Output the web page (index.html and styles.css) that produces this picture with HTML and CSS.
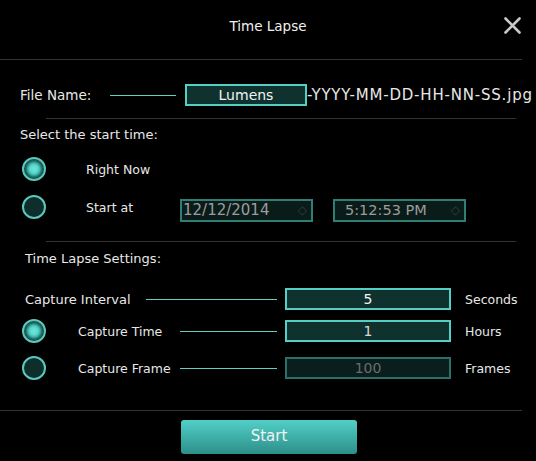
FILE: index.html
```html
<!DOCTYPE html>
<html>
<head>
<meta charset="utf-8">
<link rel="stylesheet" href="styles.css">
</head>
<body>
<div class="dialog">
  <div class="header">
    <div></div>
    <div class="title">Time Lapse</div>
    <div class="close">
      <svg width="17" height="17" viewBox="0 0 17 17"><path d="M1.5 1.5 L15.5 15.5 M15.5 1.5 L1.5 15.5" stroke="#c9c9c9" stroke-width="2.6" stroke-linecap="round"/></svg>
    </div>
  </div>

  <div class="file-row">
    <span class="file-label">File Name:</span>
    <span class="line file-line"></span>
    <div class="box file-box">Lumens</div>
    <span class="suffix">-YYYY-MM-DD-HH-NN-SS.jpg</span>
  </div>
  <div class="sep"></div>

  <div class="section-title start-title">Select the start time:</div>
  <div class="radio-row first">
    <span class="radio on"></span>
    <span class="radio-label">Right Now</span>
  </div>
  <div class="radio-row second">
    <span class="radio"></span>
    <span class="radio-label">Start at</span>
    <div class="picker"><span>12/12/2014</span><span class="spin">&#9671;</span></div>
    <div class="picker time"><span>5:12:53 PM</span><span class="spin">&#9671;</span></div>
  </div>
  <div class="sep sep2"></div>

  <div class="section-title settings-title">Time Lapse Settings:</div>
  <div class="set-row interval">
    <span class="set-label wide">Capture Interval</span>
    <span class="line l-wide"></span>
    <div class="box num">5</div>
    <span class="unit">Seconds</span>
  </div>
  <div class="set-row time-row">
    <span class="radio on"></span>
    <span class="set-label">Capture Time</span>
    <span class="line"></span>
    <div class="box num soft">1</div>
    <span class="unit">Hours</span>
  </div>
  <div class="set-row frame-row">
    <span class="radio"></span>
    <span class="set-label">Capture Frame</span>
    <span class="line"></span>
    <div class="box num dim">100</div>
    <span class="unit">Frames</span>
  </div>
  <div class="sep-full"></div>
  <div class="footer">
    <button class="start">Start</button>
  </div>
</div>
</body>
</html>
```

FILE: styles.css
```css
* { box-sizing: border-box; }
html, body {
  margin: 0;
  padding: 0;
  background: #000;
}
body {
  width: 536px;
  height: 461px;
  overflow: hidden;
  font-family: "DejaVu Sans", "Open Sans", sans-serif;
  color: #e8e8e8;
  font-size: 13px;
}
.dialog { width: 536px; }

.header {
  height: 60px;
  display: grid;
  grid-template-columns: 1fr auto 1fr;
  align-items: center;
  border-bottom: 1px solid #343434;
  margin-right: 14px;
  padding-left: 14px;
}
.title {
  font-size: 13.5px;
  color: #f0f0f0;
  padding-bottom: 8px;
}
.close {
  justify-self: end;
  margin-right: 1px;
  height: 17px;
  margin-bottom: 8px;
}
.close svg { display: block; }

.file-row {
  height: 58px;
  padding-top: 12px;
  padding-left: 20px;
  display: flex;
  align-items: center;
  white-space: nowrap;
}
.file-label { width: 90px; font-size: 13.5px; }
.line {
  display: block;
  height: 1px;
  background: #5fcfc4;
  flex: none;
}
.file-line { width: 66px; }
.box {
  border: 2px solid #55cfc3;
  background: #0f322f;
  color: #f2f2f2;
  text-align: center;
  font-size: 14px;
  display: flex;
  align-items: center;
  justify-content: center;
  flex: none;
}
.file-box {
  margin-left: 9px;
  width: 122px;
  height: 22px;
}
.suffix { font-size: 15px; letter-spacing: 0.8px; }

.sep {
  height: 1px;
  background: #333;
  margin-left: 46px;
  width: 470px;
}

.section-title {
  height: 31px;
  display: flex;
  align-items: center;
  font-size: 13px;
}
.start-title { padding-left: 20px; }
.settings-title { padding-left: 25px; height: 32px; }

.radio {
  display: block;
  width: 24px;
  height: 24px;
  border-radius: 50%;
  border: 2px solid #5cc8bc;
  background: #0d2e2b;
  flex: none;
}
.radio.on {
  background: radial-gradient(circle, #6fe6da 0, #5ad9cd 4px, #3eb3a8 6px, #1f6c66 8px, #164844 10px);
}

.radio-row {
  height: 24px;
  display: flex;
  align-items: center;
  padding-left: 22px;
}
.radio-row.first { margin-top: 7px; }
.radio-row.second { margin-top: 14px; }
.radio-label { margin-left: 40px; width: 94px; font-size: 12.5px; }

.picker {
  width: 133px;
  height: 23px;
  margin-top: 6px;
  border: 2px solid #2f7d75;
  background: #0a1c1a;
  color: #9c9c9c;
  font-size: 15px;
  display: flex;
  align-items: center;
  justify-content: space-between;
  padding: 0 4px 0 1px;
  flex: none;
}
.picker.time { margin-left: 20px; padding-left: 10px; font-size: 14.5px; }
.spin { color: #3a3a3a; font-size: 12px; }

.sep2 { margin-top: 22px; }

.set-row {
  height: 22px;
  display: flex;
  align-items: center;
  padding-left: 22px;
  white-space: nowrap;
}
.interval { padding-left: 25px; margin-top: 14px; }
.time-row { margin-top: 10px; }
.frame-row { margin-top: 15px; }
.set-label { width: 102px; margin-left: 32px; font-size: 12.5px; }
.set-label.wide { width: 121px; margin-left: 0; font-size: 13px; }
.set-row .line { width: 97px; }
.set-row .line.l-wide { width: 131px; }
.num {
  margin-left: 8px;
  width: 166px;
  height: 22px;
  font-size: 14px;
}
.num.soft { color: #d8d8d8; }
.num.dim {
  border-color: #2d6f68;
  background: #0a1f1d;
  color: #6c6c6c;
}
.unit { margin-left: 14px; font-size: 12.5px; }

.sep-full {
  height: 1px;
  background: #333;
  margin-top: 31px;
  width: 522px;
}
.footer {
  display: flex;
  padding-left: 181px;
  padding-top: 9px;
}
.start {
  width: 176px;
  height: 34px;
  border: none;
  border-radius: 3px;
  background: linear-gradient(#52cfc7, #2d8f89);
  color: #f2f2f2;
  font-family: "DejaVu Sans", "Open Sans", sans-serif;
  font-size: 15px;
  padding: 0 0 3px 0;
}
```
